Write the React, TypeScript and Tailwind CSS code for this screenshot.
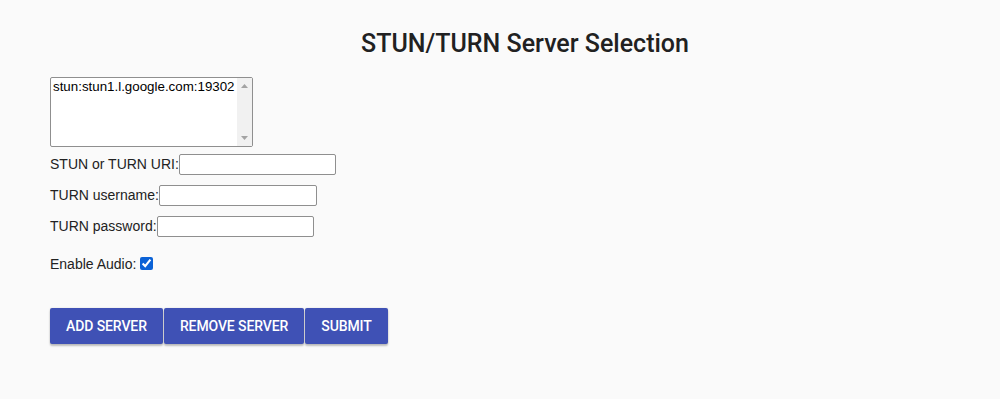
export default function App() {
  return (
    <div className="min-h-[399px] bg-[#fafafa] pl-[50px] pt-[27px] font-['Liberation_Sans',Arial,sans-serif] text-[14px] text-[#222]">
      <h1 className="text-center font-['Roboto',sans-serif] text-[25px] font-medium leading-[34px] text-[#212121]">
        STUN/TURN Server Selection
      </h1>

      <div className="mt-[16px]">
        <div className="flex h-[70px] w-[203px] rounded-[2px] border border-[#8f8f8f] bg-white">
          <div className="flex-1 pl-[2px] pt-[1px] text-[13.33px] leading-[16px] text-black">
            stun:stun1.l.google.com:19302
          </div>
          <div className="flex w-[15px] flex-col justify-between bg-[#f1f1f1] py-[5px]">
            <svg width="15" height="6" viewBox="0 0 15 6">
              <polygon points="4,5 11,5 7.5,1" fill="#a3a3a3" />
            </svg>
            <svg width="15" height="6" viewBox="0 0 15 6">
              <polygon points="4,1 11,1 7.5,5" fill="#a3a3a3" />
            </svg>
          </div>
        </div>
      </div>

      <div className="mt-[7px] flex items-center">
        <label>STUN or TURN URI:</label>
        <input type="text" className="h-[21px] w-[157px] rounded-[2px] border border-[#8f8f8f] bg-white px-[2px] text-[13px]" />
      </div>
      <div className="mt-[10px] flex items-center">
        <label>TURN username:</label>
        <input type="text" className="h-[21px] w-[158px] rounded-[2px] border border-[#8f8f8f] bg-white px-[2px] text-[13px]" />
      </div>
      <div className="mt-[10px] flex items-center">
        <label>TURN password:</label>
        <input type="password" className="h-[21px] w-[157px] rounded-[2px] border border-[#8f8f8f] bg-white px-[2px] text-[13px]" />
      </div>

      <div className="mt-[17px] flex items-center">
        <label className="mr-[4px]">Enable Audio:</label>
        <input type="checkbox" defaultChecked className="mb-[2px] h-[13px] w-[13px] accent-[#0b62d6]" />
      </div>

      <div className="mt-[33px] flex gap-[1px]">
        {["Add server", "Remove server", "Submit"].map((t) => (
          <button
            key={t}
            className="h-[36px] rounded-[2px] bg-[#3f51b5] px-[16px] font-['Roboto',sans-serif] text-[14px] font-medium uppercase tracking-[-0.1px] text-white shadow-[0_2px_2px_rgba(0,0,0,0.24),0_0_2px_rgba(0,0,0,0.12)]"
          >
            {t}
          </button>
        ))}
      </div>
    </div>
  );
}
